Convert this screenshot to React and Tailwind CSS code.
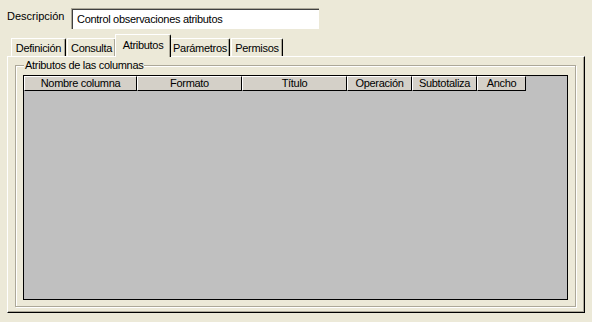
const TABS = [
  { label: 'Definición', w: 'w-[55px]', ml: 'ml-[11px]' },
  { label: 'Consulta', w: 'w-[49px]', ml: 'ml-[1px]' },
  { label: 'Atributos', w: 'w-[56px]', ml: 'ml-[-1px]', active: true },
  { label: 'Parámetros', w: 'w-[60px]', ml: 'ml-[-1px]' },
  { label: 'Permisos', w: 'w-[52px]', ml: 'ml-[1px]' },
]

const COLS = [
  { label: 'Nombre columna', w: 'w-[113px]' },
  { label: 'Formato', w: 'w-[105px]' },
  { label: 'Título', w: 'w-[105px]' },
  { label: 'Operación', w: 'w-[65px]' },
  { label: 'Subtotaliza', w: 'w-[65px]' },
  { label: 'Ancho', w: 'w-[49px]' },
]

function Tab({ tab }) {
  if (tab.active) {
    return (
      <div className={`${tab.ml} ${tab.w} relative z-10 h-[23px] mb-[-1px] bg-[#ece9d8] border-t border-l border-white border-r border-r-black rounded-tr-[2px] shadow-[inset_-1px_0_0_#aca899] text-center leading-[16px] pt-[2px]`}>
        {tab.label}
      </div>
    )
  }
  return (
    <div className={`${tab.ml} ${tab.w} h-[18px] bg-[#ece9d8] border-t border-l border-white border-r border-r-black rounded-tr-[2px] shadow-[inset_-1px_0_0_#aca899] text-center leading-[16px] pt-[1px]`}>
      {tab.label}
    </div>
  )
}

export default function App() {
  return (
    <div className="w-[592px] h-[322px] bg-[#ece9d8] overflow-hidden text-[11px] tracking-[-0.3px] text-black font-['Liberation_Sans',Arial,sans-serif]">
      {/* descripcion */}
      <div className="flex items-start pt-[8px] pl-[7px]">
        <span className="w-[64px] mt-[1px] leading-[14px] tracking-normal">Descripción</span>
        <div className="w-[248px] h-[21px] bg-white border-t border-l border-[#aca899] shadow-[inset_1px_1px_0_#404040] pl-[5px] leading-[20px]">
          Control observaciones atributos
        </div>
      </div>

      {/* pestañas */}
      <div className="flex items-end h-[23px] mt-[4px]">
        {TABS.map(t => <Tab key={t.label} tab={t} />)}
      </div>

      {/* panel */}
      <div className="ml-[7px] w-[578px] h-[257px] border-t border-l border-white border-r border-b border-r-black border-b-black shadow-[inset_-1px_-1px_0_#aca899] pt-[8px] pl-[7px]">
        <div className="relative w-[561px] h-[242px] border border-[#aca899] shadow-[1px_1px_0_#fff,inset_1px_1px_0_#fff] pt-[9px] pl-[7px]">
          <span className="absolute left-[8px] top-[-7px] bg-[#ece9d8] px-[1px] leading-[12px]">Atributos de las columnas</span>
          <div className="w-[545px] h-[225px] bg-[#c0c0c0] border border-black">
            <div className="flex">
              {COLS.map(c => (
                <div key={c.label} className={`${c.w} h-[15px] bg-[#d4d0c8] border-t border-l border-white border-r border-b border-r-black border-b-black text-center leading-[13px]`}>
                  {c.label}
                </div>
              ))}
            </div>
          </div>
        </div>
      </div>
    </div>
  )
}
